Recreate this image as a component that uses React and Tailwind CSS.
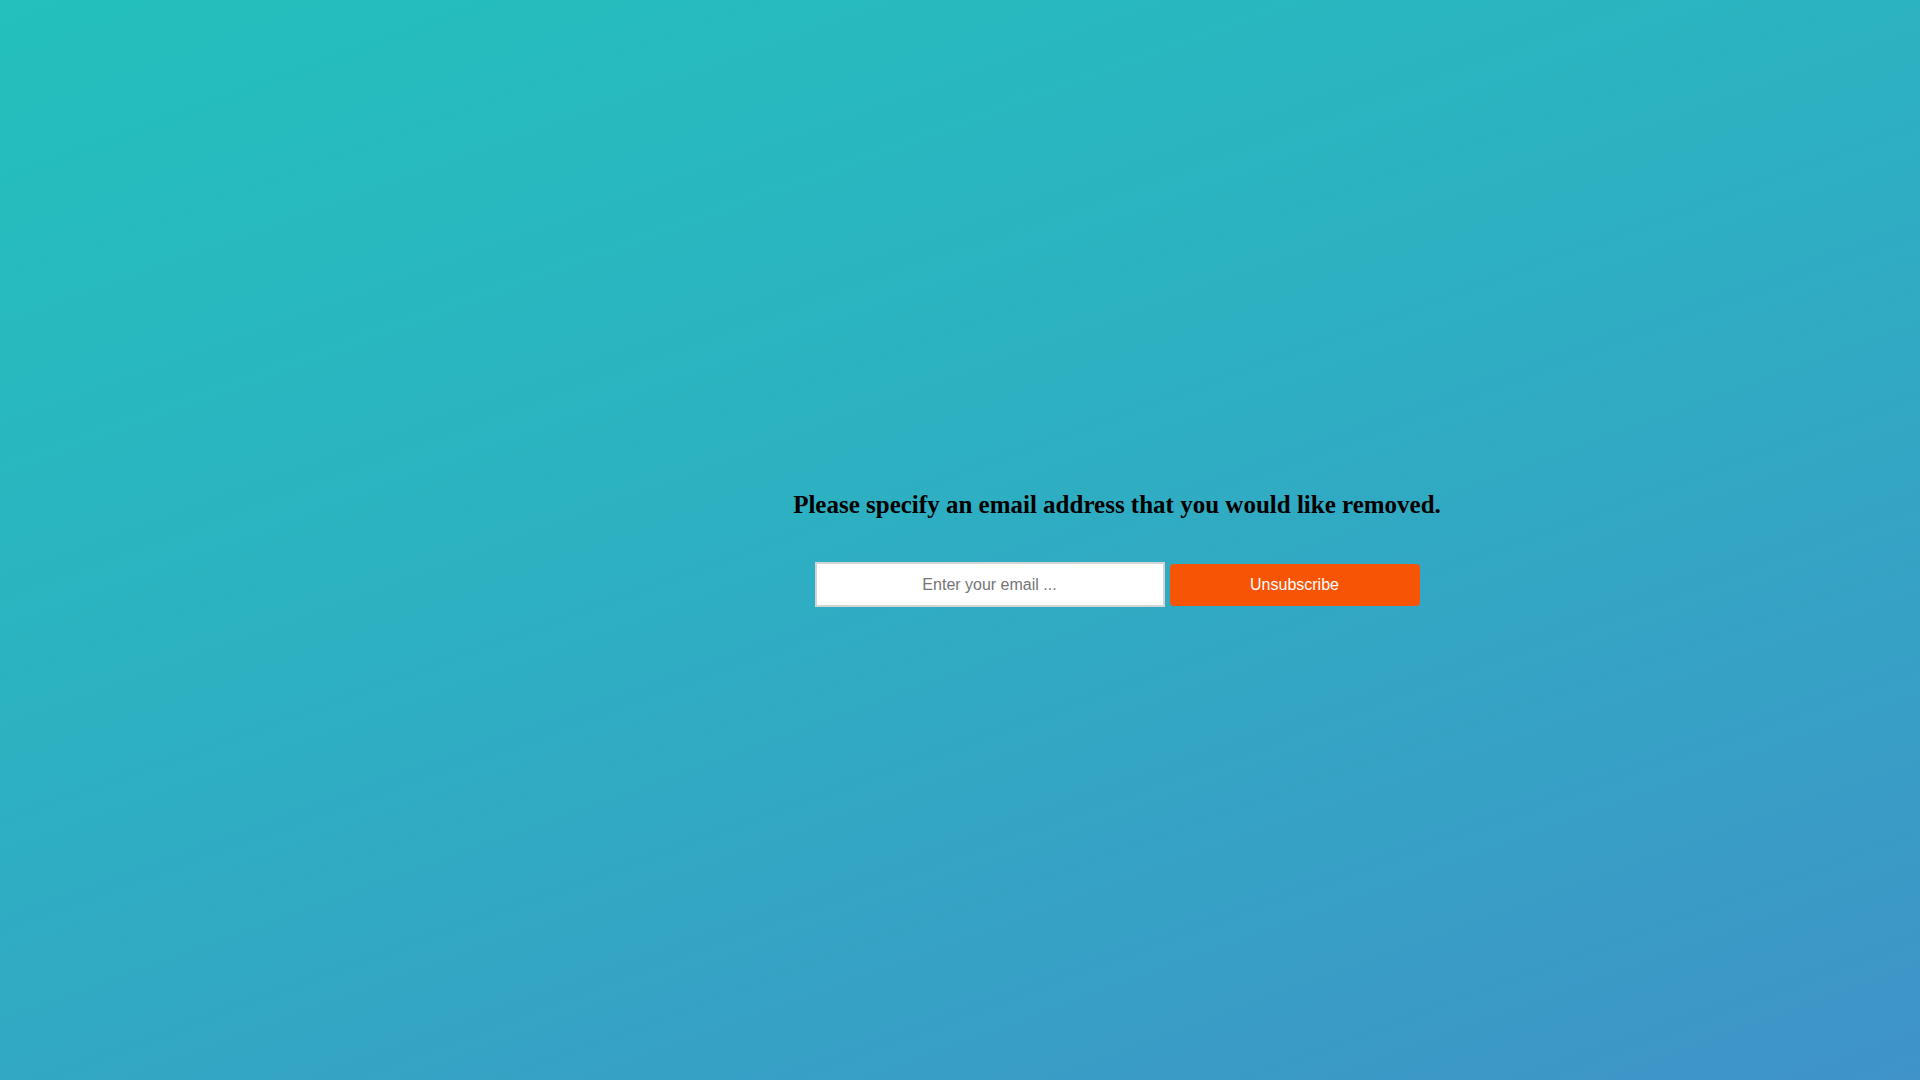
export default function App() {
  return (
    <div className="min-h-screen w-full flex bg-[linear-gradient(160deg,#23c0bc_0%,#2db0c2_45%,#3f93c8_100%)]">
      <div className="w-[314px] shrink-0" />
      <div className="flex-1 flex flex-col items-center pt-[489px]">
        <h2 className="text-[25px] font-bold text-black leading-[32px] font-['Liberation_Serif',serif]">
          Please specify an email address that you would like removed.
        </h2>
        <div className="mt-[41px] flex items-center gap-[5px]">
          <input
            type="text"
            placeholder="Enter your email ..."
            className="w-[350px] h-[45px] bg-white border-2 border-[#d4d4d4] text-center text-[16px] text-[#333] placeholder:text-[#757575] font-['Liberation_Sans',sans-serif] outline-none"
          />
          <button className="w-[250px] h-[42px] bg-[#f75405] rounded-[4px] text-white text-[16px] font-['Liberation_Sans',sans-serif]">
            Unsubscribe
          </button>
        </div>
      </div>
    </div>
  );
}
